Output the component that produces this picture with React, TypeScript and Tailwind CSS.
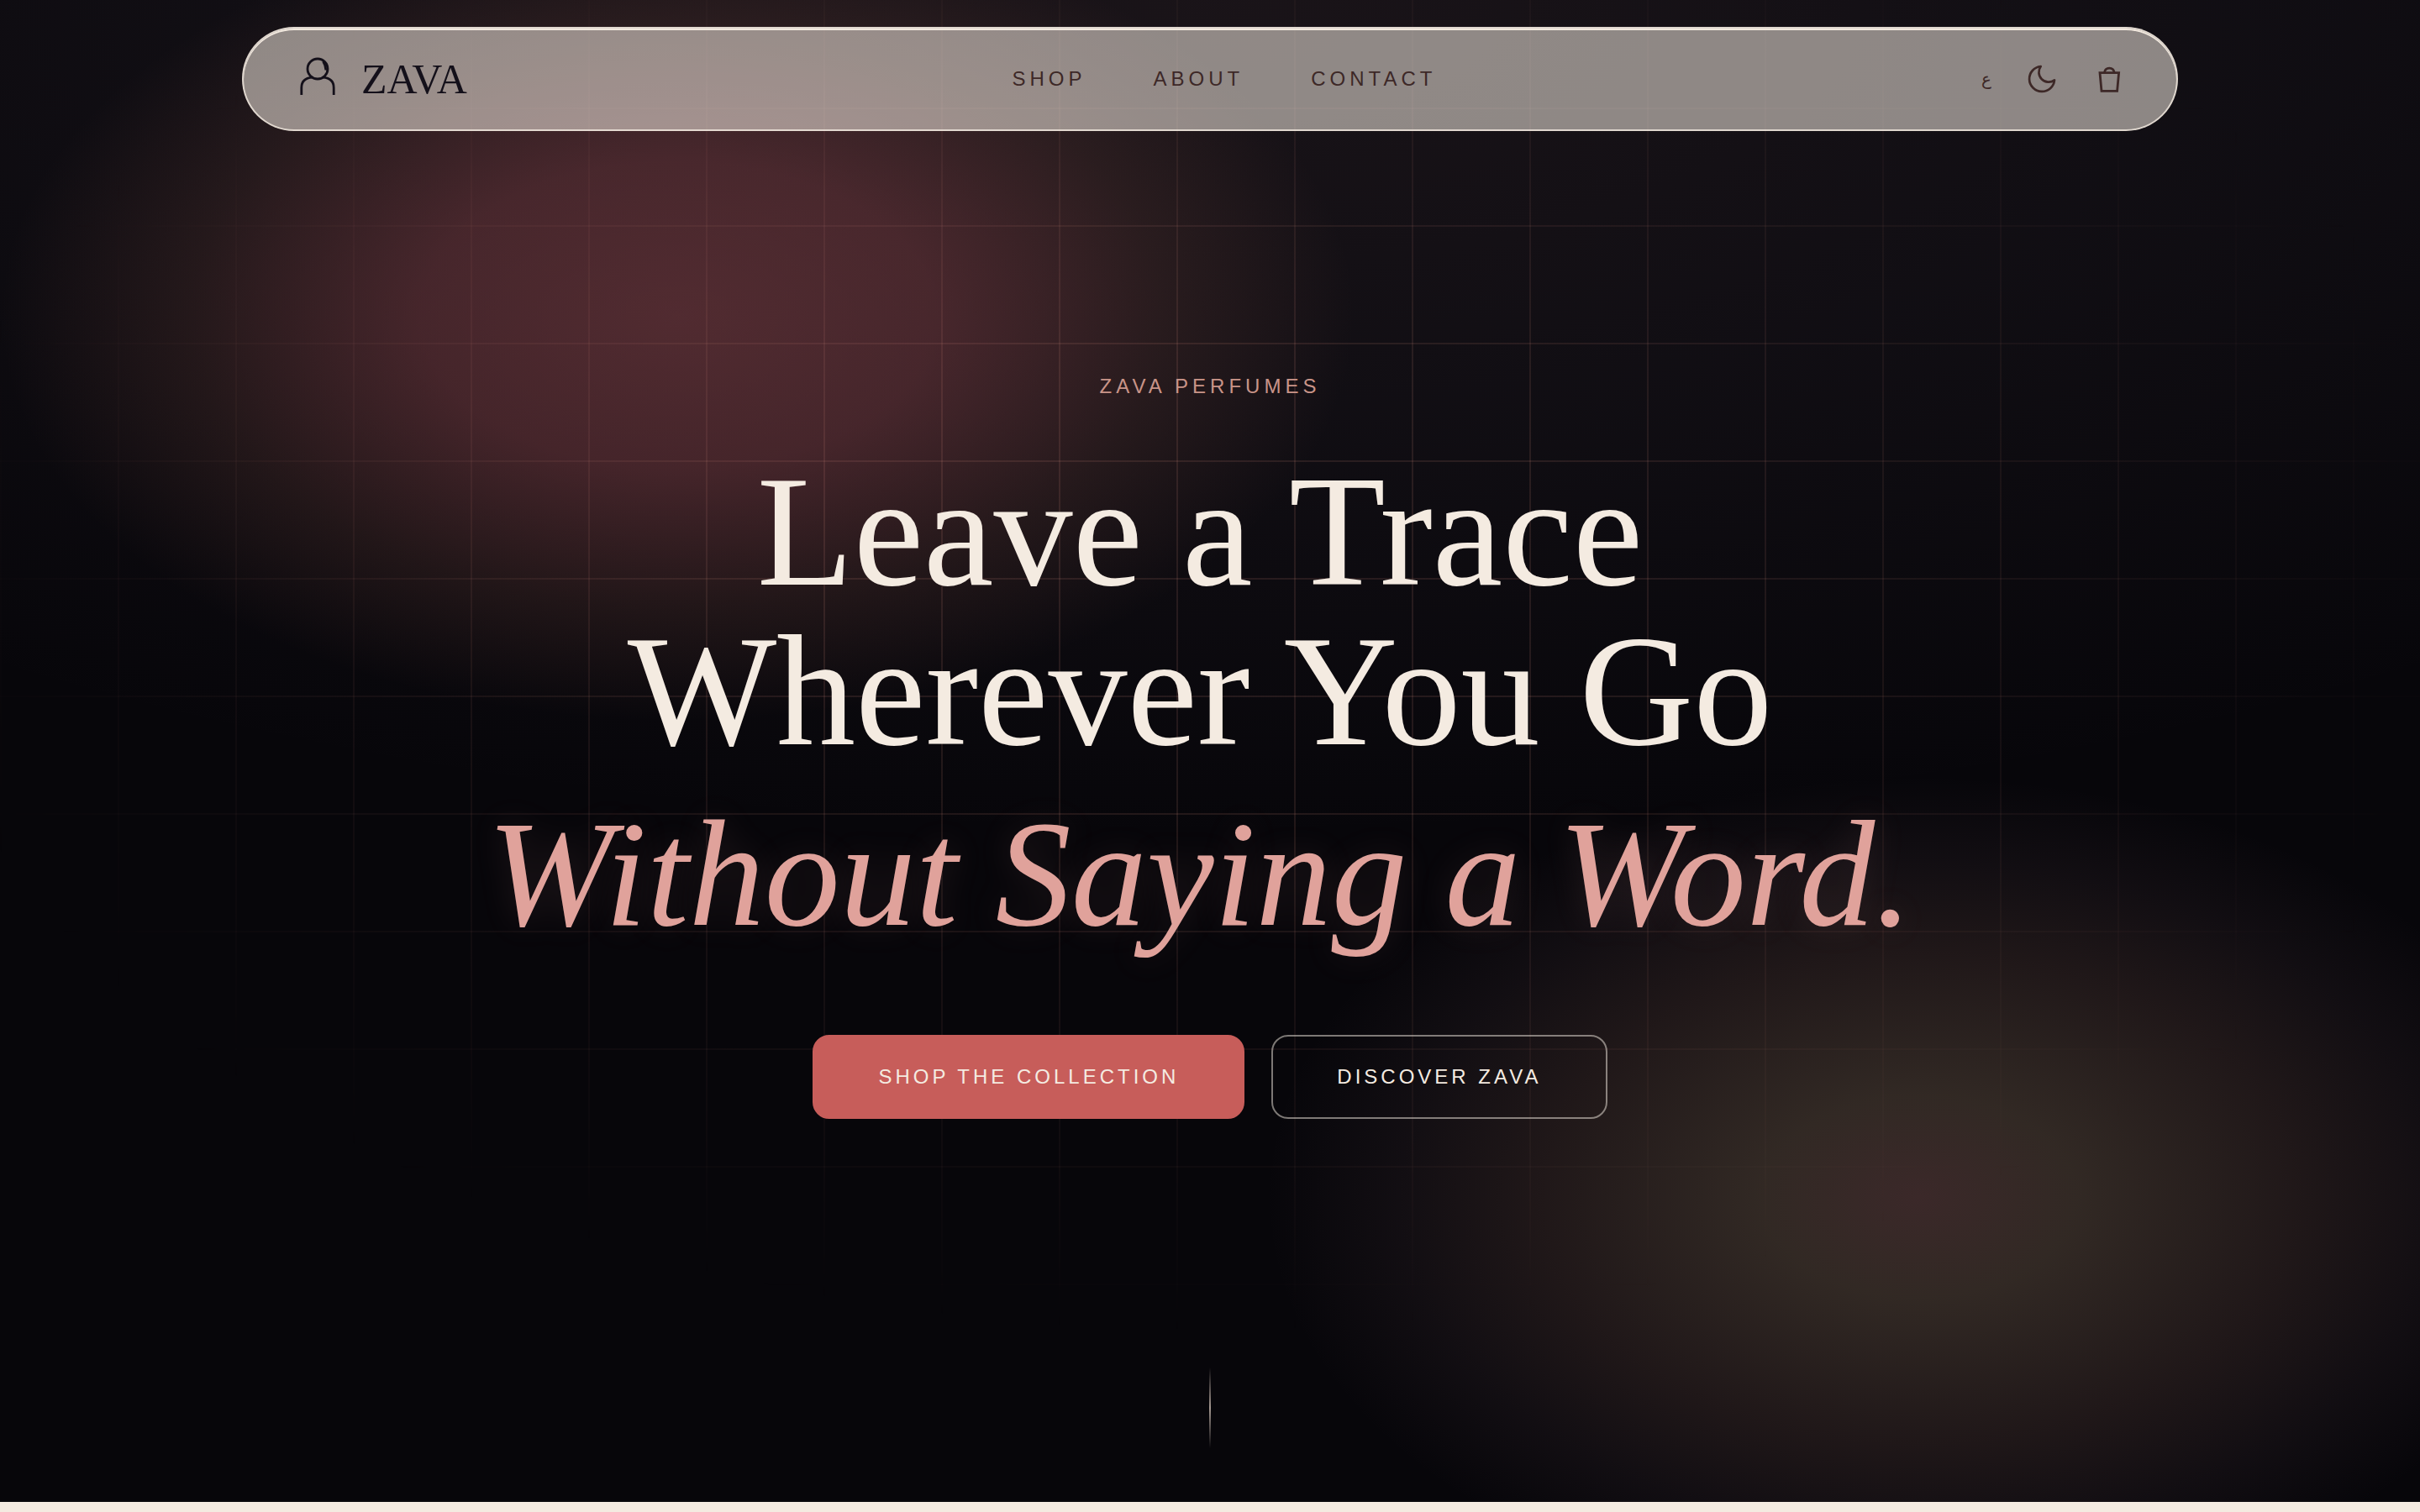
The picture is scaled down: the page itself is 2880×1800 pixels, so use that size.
const links = [
  { label: "Shop", href: "#shop" },
  { label: "About", href: "#about" },
  { label: "Contact", href: "#contact" },
];

const LogoMark = () => (
  <svg viewBox="0 0 64 64" className="size-16" fill="none" stroke="currentColor" strokeWidth="2.8" aria-hidden="true">
    <circle cx="32" cy="20" r="12" />
    <path d="M12.8 51V42.5C12.8 35 17.5 30.8 25.5 30.2" />
    <path d="M51.2 51V42.5C51.2 35 46.5 30.8 38.5 30.2" />
    <path d="M38.5 11C40.5 14 41.6 16.5 41.9 21.5" />
  </svg>
);

const MoonIcon = () => (
  <svg viewBox="0 0 24 24" className="size-10" fill="none" stroke="currentColor" strokeWidth="1.6" strokeLinejoin="round" aria-hidden="true">
    <path d="M21 12.79A9 9 0 1 1 11.21 3 7 7 0 0 0 21 12.79z" />
  </svg>
);

const BagIcon = () => (
  <svg viewBox="0 0 40 40" className="size-10" fill="none" stroke="currentColor" strokeWidth="2.8" aria-hidden="true">
    <path d="M9 12.6H31.6L29.6 34.4H11Z" />
    <path d="M14.4 12.5C15.4 5.4 25.2 5.4 26.2 12.5" />
  </svg>
);

const Navbar = () => (
  <header className="col-start-1 row-start-1 z-20 w-4/5 self-start justify-self-center pt-8">
    <nav className="flex h-[124px] items-center justify-between rounded-full border-2 border-[#f4ebe1]/80 bg-[#f4ebe1]/55 pr-15 pl-14 shadow-[inset_0_2px_0_#f2e9df]">
      <a href="#top" className="flex items-center gap-5 text-[#14101a]">
        <LogoMark />
        <span className="font-['Liberation_Serif',serif] text-[50px] leading-none">ZAVA</span>
      </a>

      <div className="flex items-center gap-20">
        {links.map((link) => (
          <a key={link.href} href={link.href} className="text-2xl tracking-[5px] text-[#3d2827] uppercase">
            {link.label}
          </a>
        ))}
      </div>

      <div className="flex items-center gap-10 text-[#3d2827]">
        <button type="button" aria-label="Switch to Arabic" className="text-xl">
          ع
        </button>
        <button type="button" aria-label="Toggle theme">
          <MoonIcon />
        </button>
        <button type="button" aria-label="Open cart">
          <BagIcon />
        </button>
      </div>
    </nav>
  </header>
);

// Soft glows and the masked grid behind the hero copy
const Backdrop = () => (
  <>
    <div className="col-start-1 row-start-1 bg-[radial-gradient(ellipse_85%_56%_at_50%_0%,rgba(190,140,150,0.1),rgba(170,140,165,0.06)_50%,transparent)]" />
    <div className="col-start-1 row-start-1 bg-[radial-gradient(ellipse_28%_27%_at_28%_21%,rgba(190,92,98,0.37),rgba(190,92,98,0.31)_38%,rgba(180,105,90,0.13)_72%,transparent)]" />
    <div className="col-start-1 row-start-1 bg-[radial-gradient(ellipse_27%_28%_at_79.3%_79.7%,rgba(224,150,140,0.24),rgba(220,180,140,0.2)_24%,rgba(210,150,130,0.12)_58%,rgba(190,140,150,0.06)_80%,transparent)]" />
    <div className="col-start-1 row-start-1 bg-[linear-gradient(to_right,rgba(224,145,130,0.13)_2px,transparent_2px),linear-gradient(to_bottom,rgba(224,145,130,0.13)_2px,transparent_2px)] bg-[length:140px_140px] bg-[position:0_-12px] [mask-image:radial-gradient(ellipse_54%_50%_at_50%_39%,black_30%,transparent)]" />
  </>
);

const Hero = () => (
  <section className="col-start-1 row-start-1 z-10 flex flex-col items-center self-center pb-[14px] text-center">
    <p className="mb-[60px] text-2xl leading-9 tracking-[5px] text-[#c99488] uppercase">Zava Perfumes</p>

    <h1 className="mb-24 pr-6 font-['Liberation_Serif',serif] text-[188px] leading-[190px] text-[#f4ebe1]">
      <span className="block">Leave a Trace</span>
      <span className="block">Wherever You Go</span>
      <em className="mt-7 block text-[180px] leading-[190px] text-[#e0a29b] [text-shadow:0_0_40px_rgba(224,162,155,0.14)]">
        Without Saying a Word.
      </em>
    </h1>

    <div className="flex gap-8 text-2xl font-medium tracking-[4px] text-[#f4ebe1]">
      <a href="#shop" className="flex h-[100px] items-center rounded-[20px] border-2 border-[#c75d5a] bg-[#c75d5a] px-19 uppercase">
        Shop the Collection
      </a>
      <a href="#about" className="flex h-[100px] items-center rounded-[20px] border-2 border-[#f4ebe1]/50 px-19 uppercase">
        Discover Zava
      </a>
    </div>
  </section>
);

export default function App() {
  return (
    <div id="top" className="min-h-screen bg-[#f4ebe1] font-['Liberation_Sans',sans-serif]">
      <main className="grid min-h-[calc(100vh-12px)] overflow-hidden bg-[#07060a]">
        <Backdrop />
        <Navbar />
        <Hero />
        <div className="col-start-1 row-start-1 z-10 mb-16 h-24 w-0.5 self-end justify-self-center bg-linear-to-b from-transparent via-[#a39790] to-transparent" />
      </main>
    </div>
  );
}
